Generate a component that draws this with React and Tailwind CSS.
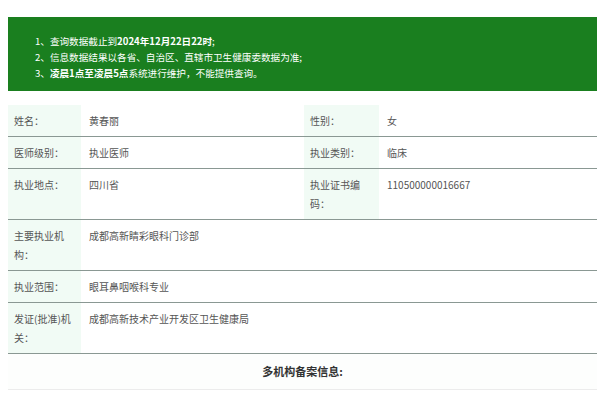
import React from "react";

const font = { fontFamily: '"Noto Sans CJK SC", "Noto Sans", sans-serif' };

function Row({ cells }) {
  return (
    <div className="grid grid-cols-[73px_223px_75px_218px] border-b border-[#8a9893]">
      {cells}
    </div>
  );
}

const Label = ({ children }) => (
  <div className="bg-[#f1fbf5] pl-[6px] pr-[4px] py-[6px] leading-[19px] text-[#555]">{children}</div>
);
const Value = ({ children, span }) => (
  <div className={"pl-[8px] py-[6px] leading-[19px] text-[#555] " + (span ? "col-span-3" : "")}>{children}</div>
);

export default function App() {
  return (
    <div className="w-[600px] h-[400px] bg-white overflow-hidden" style={font}>
      <div className="ml-[8px] mt-[17px] w-[589px] bg-[#1a7f1f] pl-[27px] pt-[16px] pb-[10px] text-white text-[9.6px] leading-[16px]">
        <div>1、查询数据截止到<b>2024年12月22日22时</b>;</div>
        <div>2、信息数据结果以各省、自治区、直辖市卫生健康委数据为准;</div>
        <div>3、<b>凌晨1点至凌晨5点</b>系统进行维护，不能提供查询。</div>
      </div>
      <div className="ml-[8px] mt-[14px] w-[589px] text-[10px]">
        <Row cells={<><Label>姓名：</Label><Value>黄春丽</Value><Label>性别：</Label><Value>女</Value></>} />
        <Row cells={<><Label>医师级别：</Label><Value>执业医师</Value><Label>执业类别：</Label><Value>临床</Value></>} />
        <Row cells={<><Label>执业地点：</Label><Value>四川省</Value><Label>执业证书编码：</Label><Value>110500000016667</Value></>} />
        <Row cells={<><Label>主要执业机构：</Label><Value span>成都高新睛彩眼科门诊部</Value></>} />
        <Row cells={<><Label>执业范围：</Label><Value span>眼耳鼻咽喉科专业</Value></>} />
        <Row cells={<><Label>发证(批准)机关：</Label><Value span>成都高新技术产业开发区卫生健康局</Value></>} />
        <div className="h-[36px] flex items-center justify-center border-b border-[#ececec] bg-[#fdfefd] text-[11px] font-bold text-[#333]">
          多机构备案信息:
        </div>
      </div>
    </div>
  );
}
